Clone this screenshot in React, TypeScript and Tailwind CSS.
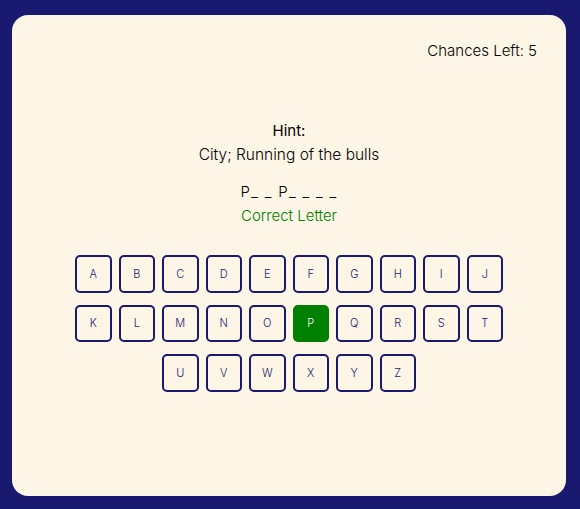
import React from "react";

const rows = [
  ["A", "B", "C", "D", "E", "F", "G", "H", "I", "J"],
  ["K", "L", "M", "N", "O", "P", "Q", "R", "S", "T"],
  ["U", "V", "W", "X", "Y", "Z"],
];

export default function App() {
  return (
    <div
      className="w-[580px] h-[509px] bg-[#191970] pt-[15px] pl-[12px]"
      style={{ fontFamily: "Inter, 'Noto Sans', sans-serif" }}
    >
      <div className="w-[554px] h-[481px] bg-[#fdf5e6] rounded-[16px] flex flex-col text-black">
        <div className="flex justify-end pr-[29px] pt-[24px] text-[15px] leading-[24px] font-light">
          Chances Left: 5
        </div>
        <div className="mt-[56px] flex flex-col items-center">
          <div className="text-[15px] leading-[24px] font-normal">Hint:</div>
          <div className="text-[15.5px] leading-[24px] font-light">City; Running of the bulls</div>
          <div className="mt-[12.5px] text-[15px] leading-[24px] font-light whitespace-pre tracking-[1.3px]">P_ _ P_ _ _ _</div>
          <div className="text-[15px] leading-[24px] font-light text-[#008000]">Correct Letter</div>
        </div>
        <div className="mt-[27.5px] flex flex-col items-center gap-y-[12px]">
          {rows.map((row, i) => (
            <div key={i} className="flex gap-x-[7px]">
              {row.map((l) => (
                <div
                  key={l}
                  className={
                    l === "P"
                      ? "w-[36.5px] h-[37.5px] rounded-[5px] bg-[#008000] text-white flex items-center justify-center text-[11px] font-light"
                      : "w-[36.5px] h-[37.5px] rounded-[5px] border-2 border-[#191970] text-[#191970] flex items-center justify-center text-[11px] font-light"
                  }
                >
                  {l}
                </div>
              ))}
            </div>
          ))}
        </div>
      </div>
    </div>
  );
}
